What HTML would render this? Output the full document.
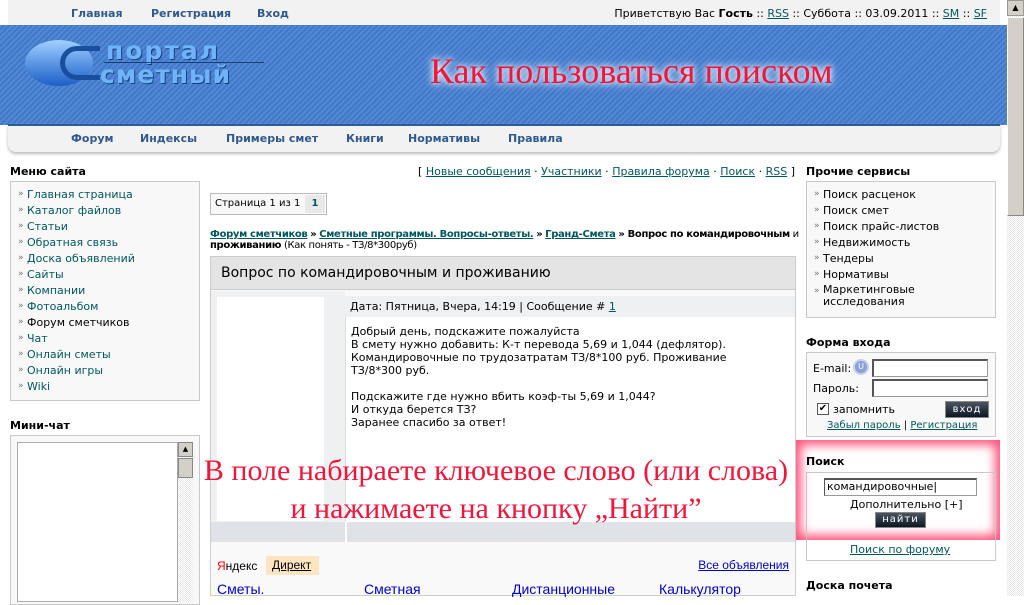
<!DOCTYPE html>
<html><head><meta charset="utf-8"><style>
*{margin:0;padding:0;box-sizing:border-box}
body{width:1024px;height:596px;overflow:hidden;background:#fff;font-family:"DejaVu Sans","Liberation Sans",sans-serif;font-size:11px;color:#000;position:relative}
.a{position:absolute;white-space:nowrap}
a{color:#00585e;text-decoration:underline}
.b{font-weight:bold}
.nav{color:#2f5a8f;font-weight:bold;font-size:11px}
.box{position:absolute;border:1px solid #c8c8c8;background:#f8f8f8}
.li{position:absolute;left:16px;color:#00585e}
.li:before{content:"»";position:absolute;left:-9px;color:#777;font-size:9px;top:1px}
.red{font-family:"Liberation Serif",serif;color:#f0153a;position:absolute;white-space:nowrap}
.btn{position:absolute;background:linear-gradient(#4a5562,#0d1724);color:#fff;font-size:10px;text-align:center;letter-spacing:1px;border:1px solid #888}
.inp{position:absolute;background:#fff;border:1px solid #999;border-top:2px solid #555;border-left:2px solid #555}
</style></head><body>

<div class="a" style="left:0;top:25px;width:1007px;height:100px;background:repeating-linear-gradient(135deg,#5288d6 0 2px,#4278c8 2px 4px);"></div>
<div class="a" style="left:8px;top:0;width:992px;height:25px;background:#f2f2f2"></div>
<div class="a" style="left:8px;top:124px;width:992px;height:28px;background:#f2f2f2;border-radius:0 0 8px 8px;box-shadow:0 2px 3px #bbb;border-top:2px solid #2e5d95"></div>

<div class="a nav" style="left:71px;top:7px">Главная</div>
<div class="a nav" style="left:151px;top:7px">Регистрация</div>
<div class="a nav" style="left:257px;top:7px">Вход</div>
<div class="a" style="right:37px;top:7px">Приветствую Вас <b>Гость</b> :: <a>RSS</a> :: Суббота :: 03.09.2011 :: <a>SM</a> :: <a>SF</a></div>

<div class="a" style="left:25px;top:40px;width:68px;height:46px;border-radius:50%;background:linear-gradient(#9fd0ff,#1b5fc8);"></div>
<div class="a" style="left:60px;top:46px;width:40px;height:34px;border:5px solid #1a4f9d;border-right:none;border-radius:20px 0 0 20px;"></div>
<div class="a" style="left:106px;top:36px;font:900 25px 'DejaVu Sans',sans-serif;color:#6fb4f8;letter-spacing:2px;text-shadow:1px 1px #1a3f7a">портал</div>
<div class="a" style="left:100px;top:60px;font:900 25px 'DejaVu Sans',sans-serif;color:#6fb4f8;letter-spacing:1px;text-shadow:1px 1px #1a3f7a">сметный</div>
<div class="a" style="left:104px;top:62px;width:160px;height:1px;background:#1a3f7a"></div>

<div class="red" style="left:430px;top:50px;font-size:36px;text-shadow:0 0 6px #fff,0 0 10px #fff">Как пользоваться поиском</div>

<div class="a nav" style="left:71px;top:132px">Форум</div>
<div class="a nav" style="left:140px;top:132px">Индексы</div>
<div class="a nav" style="left:226px;top:132px">Примеры смет</div>
<div class="a nav" style="left:346px;top:132px">Книги</div>
<div class="a nav" style="left:408px;top:132px">Нормативы</div>
<div class="a nav" style="left:508px;top:132px">Правила</div>

<div class="a" style="left:1007px;top:0;width:17px;height:596px;background:repeating-conic-gradient(#e6e6e6 0 25%,#fff 0 50%) 0 0/2px 2px"></div>
<div class="a" style="left:1007px;top:0;width:17px;height:16px;background:#d4d0c8;border:1px solid #999;font-size:8px;text-align:center;line-height:14px">▲</div>
<div class="a" style="left:1007px;top:17px;width:17px;height:199px;background:#d4d0c8;border:1px solid #888;border-top-color:#fff;border-left-color:#fff"></div>

<div class="a b" style="left:10px;top:165px">Меню сайта</div>
<div class="box" style="left:10px;top:181px;width:190px;height:220px">
<div class="li" style="top:6px">Главная страница</div>
<div class="li" style="top:22px">Каталог файлов</div>
<div class="li" style="top:38px">Статьи</div>
<div class="li" style="top:54px">Обратная связь</div>
<div class="li" style="top:70px">Доска объявлений</div>
<div class="li" style="top:86px">Сайты</div>
<div class="li" style="top:102px">Компании</div>
<div class="li" style="top:118px">Фотоальбом</div>
<div class="li" style="top:134px;color:#000">Форум сметчиков</div>
<div class="li" style="top:150px">Чат</div>
<div class="li" style="top:166px">Онлайн сметы</div>
<div class="li" style="top:182px">Онлайн игры</div>
<div class="li" style="top:198px">Wiki</div>
</div>
<div class="a b" style="left:10px;top:419px">Мини-чат</div>
<div class="box" style="left:10px;top:435px;width:190px;height:170px"></div>
<div class="a" style="left:17px;top:442px;width:161px;height:160px;background:#fff;border:1px solid #aaa"></div>
<div class="a" style="left:178px;top:442px;width:15px;height:160px;background:repeating-conic-gradient(#e6e6e6 0 25%,#fff 0 50%) 0 0/2px 2px"></div>
<div class="a" style="left:178px;top:442px;width:15px;height:15px;background:#d4d0c8;border:1px solid #888;font-size:7px;text-align:center;line-height:13px">▲</div>
<div class="a" style="left:178px;top:458px;width:15px;height:20px;background:#d4d0c8;border:1px solid #888"></div>

<div class="a" style="right:229px;top:165px">[ <a>Новые сообщения</a> · <a>Участники</a> · <a>Правила форума</a> · <a>Поиск</a> · <a>RSS</a> ]</div>
<div class="a" style="left:210px;top:193px;width:117px;height:22px;border:1px solid #bbb;background:#f8f8f8;font-size:10px;line-height:20px;padding-left:4px">Страница 1 из 1<span style="position:absolute;left:94px;top:1px;width:20px;height:18px;background:#e8e8e8;text-align:center;color:#00585e;font-weight:bold;line-height:18px">1</span></div>
<div class="a" style="left:210px;top:229px;font-size:10px;line-height:11px;white-space:normal;width:592px;letter-spacing:-0.35px"><a class="b">Форум сметчиков</a> <b>»</b> <a class="b">Сметные программы. Вопросы-ответы.</a> <b>»</b> <a class="b">Гранд-Смета</a> <b>» Вопрос по командировочным</b> и <b>проживанию</b> (Как понять - ТЗ/8*300руб)</div>

<div class="a" style="left:210px;top:256px;width:586px;height:340px;border:1px solid #ccc;background:#f9f9f9"></div>
<div class="a" style="left:211px;top:257px;width:584px;height:33px;background:#e4e4e4;border-bottom:1px solid #ccc;font-size:14px;line-height:33px;padding-left:10px">Вопрос по командировочным и проживанию</div>
<div class="a" style="left:211px;top:291px;width:134px;height:231px;background:#eef0f2"></div>
<div class="a" style="left:217px;top:297px;width:107px;height:224px;background:#fff"></div>
<div class="a" style="left:345px;top:296px;width:450px;height:21px;background:#eef0f2;line-height:21px;padding-left:5px">Дата: Пятница, Вчера, 14:19 | Сообщение # <a>1</a></div>
<div class="a" style="left:345px;top:317px;width:450px;height:205px;background:#fff;border-left:1px solid #ddd"></div>
<div class="a" style="left:351px;top:325px;line-height:13px">Добрый день, подскажите пожалуйста<br>В смету нужно добавить: К-т перевода 5,69 и 1,044 (дефлятор).<br>Командировочные по трудозатратам ТЗ/8*100 руб. Проживание<br>ТЗ/8*300 руб.<br><br>Подскажите где нужно вбить коэф-ты 5,69 и 1,044?<br>И откуда берется ТЗ?<br>Заранее спасибо за ответ!</div>
<div class="a" style="left:211px;top:522px;width:584px;height:20px;background:#dfe2e6"></div>
<div class="a" style="left:345px;top:522px;width:2px;height:20px;background:#fff"></div>
<div class="a" style="left:217px;top:559px;font-family:'Liberation Sans',sans-serif;font-size:12px"><span style="color:red">Я</span>ндекс</div>
<div class="a" style="left:266px;top:556px;width:53px;height:19px;background:#fde5c2;font-family:'Liberation Sans',sans-serif;font-size:12px;line-height:19px;padding-left:6px;text-decoration:underline">Директ</div>
<div class="a" style="right:235px;top:558px;font-family:'Liberation Sans',sans-serif;font-size:12px;color:#00c;text-decoration:underline">Все объявления</div>
<div class="a" style="left:217px;top:581px;font-family:'Liberation Sans',sans-serif;font-size:14px;color:#00c">Сметы.</div>
<div class="a" style="left:364px;top:581px;font-family:'Liberation Sans',sans-serif;font-size:14px;color:#00c">Сметная</div>
<div class="a" style="left:512px;top:581px;font-family:'Liberation Sans',sans-serif;font-size:14px;color:#00c">Дистанционные</div>
<div class="a" style="left:659px;top:581px;font-family:'Liberation Sans',sans-serif;font-size:14px;color:#00c">Калькулятор</div>

<div class="red" style="left:197px;top:452px;font-size:30px;width:598px;text-align:center;line-height:38px;white-space:normal">В поле набираете ключевое слово (или слова)<br>и нажимаете на кнопку „Найти”</div>

<div class="a b" style="left:806px;top:165px">Прочие сервисы</div>
<div class="box" style="left:806px;top:181px;width:190px;height:137px">
<div class="li" style="top:6px;color:#000">Поиск расценок</div>
<div class="li" style="top:22px;color:#000">Поиск смет</div>
<div class="li" style="top:38px;color:#000">Поиск прайс-листов</div>
<div class="li" style="top:54px;color:#000">Недвижимость</div>
<div class="li" style="top:70px;color:#000">Тендеры</div>
<div class="li" style="top:86px;color:#000">Нормативы</div>
<div class="li" style="top:102px;color:#000;line-height:12px">Маркетинговые<br>исследования</div>
</div>
<div class="a b" style="left:806px;top:336px">Форма входа</div>
<div class="box" style="left:806px;top:352px;width:190px;height:85px"></div>
<div class="a" style="left:813px;top:362px">E-mail:</div>
<div class="a" style="left:853px;top:359px;width:16px;height:16px;border-radius:50%;background:#8aa0d8;color:#fff;font-size:8px;text-align:center;line-height:12px;border:2px solid #c8d0ea">U</div>
<div class="inp" style="left:872px;top:359px;width:116px;height:18px"></div>
<div class="a" style="left:813px;top:382px">Пароль:</div>
<div class="inp" style="left:872px;top:379px;width:116px;height:18px"></div>
<div class="a" style="left:817px;top:403px;width:12px;height:12px;border:1px solid #555;background:#fff;font-size:10px;line-height:10px;text-align:center">✔</div>
<div class="a" style="left:833px;top:403px">запомнить</div>
<div class="btn" style="left:945px;top:401px;width:44px;height:17px;line-height:15px">вход</div>
<div class="a" style="left:827px;top:420px;font-size:10px"><a>Забыл пароль</a> | <a>Регистрация</a></div>

<div class="a" style="left:796px;top:440px;width:204px;height:100px;box-shadow:inset 0 0 10px 5px rgba(255,40,90,0.8)"></div>
<div class="a b" style="left:806px;top:455px">Поиск</div>
<div class="box" style="left:806px;top:472px;width:190px;height:89px;background:transparent"></div>
<div class="inp" style="left:824px;top:478px;width:153px;height:18px;font-size:11px;line-height:14px;padding-left:2px;border-width:1px;border-top:2px solid #555">командировочные|</div>
<div class="a" style="left:850px;top:498px">Дополнительно [+]</div>
<div class="btn" style="left:875px;top:512px;width:51px;height:16px;line-height:14px">найти</div>
<div class="a" style="left:850px;top:543px"><a>Поиск по форуму</a></div>
<div class="a b" style="left:806px;top:579px">Доска почета</div>
</body></html>
